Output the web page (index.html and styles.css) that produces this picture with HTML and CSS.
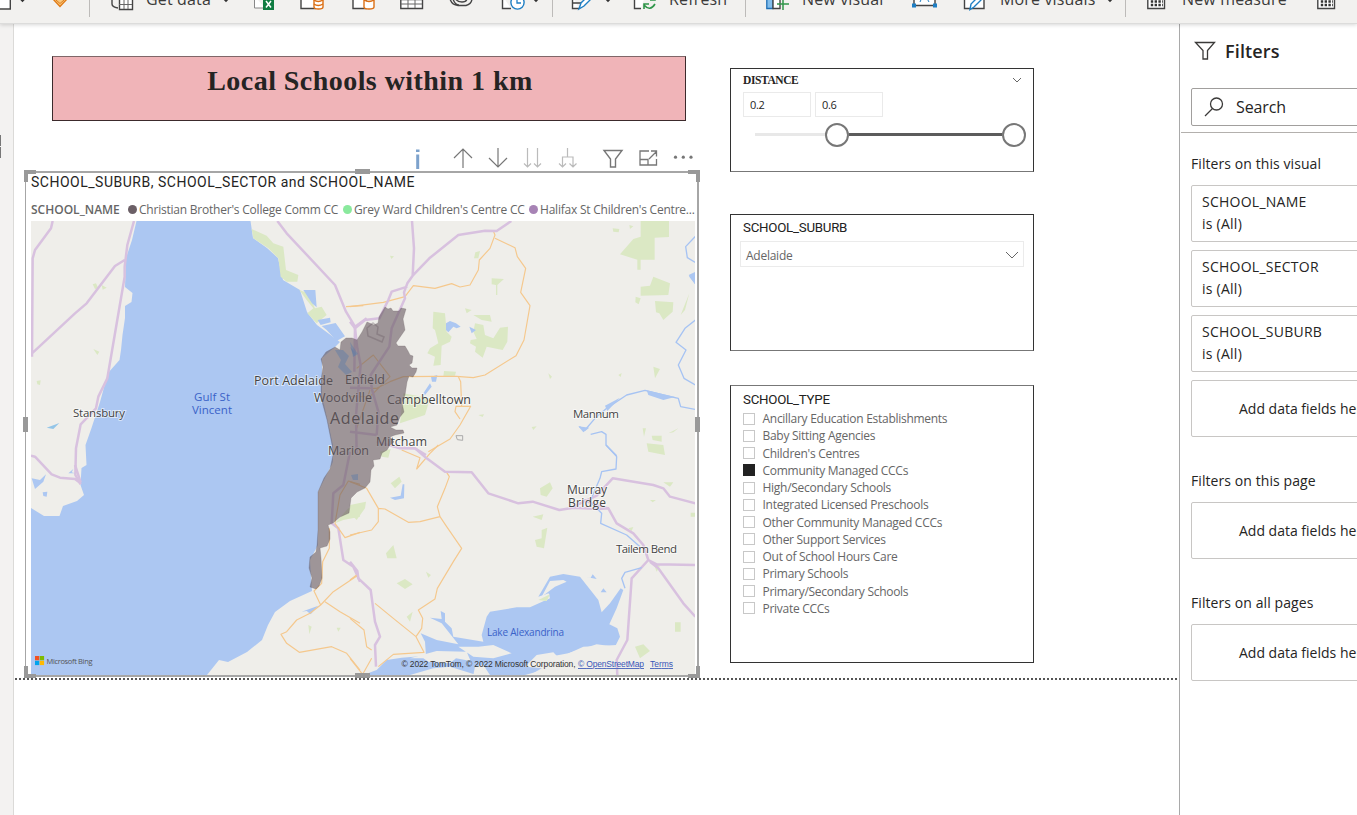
FILE: index.html
```html
<!DOCTYPE html>
<html lang="en">
<head>
<meta charset="utf-8">
<title>Local Schools report</title>
<link rel="stylesheet" href="styles.css">
</head>
<body>
<div class="app">
  <header class="ribbon">
    <svg class="ico" viewBox="0 0 24 23"><path class="line" fill="#fff" d="M-6-6H10.300V9H-6z"/></svg>
    <svg class="chev" viewBox="0 0 10 23"><path d="M1.500-2 4.500 1.200 7.500-2"/></svg>
    <svg class="ico" viewBox="0 0 24 23"><path d="M3-1 10 6.500 17-1z" fill="#f8c981" stroke="#e07b16" stroke-width="1.400"/><path d="M6 0 10 3.500 14 0" fill="none" stroke="#e07b16"/></svg>
    <i class="sep"></i>
    <svg class="ico" viewBox="0 0 24 23"><path class="line" fill="none" d="M2-6V4Q2 7 8 8"/><path class="line" fill="#fff" d="M9.500-5H22.500V9.500H9.500z"/><path class="thin" d="M9 4.500H22M14-3V9M18-3V9"/></svg>
    <span class="cmd get">Get data</span>
    <svg class="chev" viewBox="0 0 10 23"><path d="M2-2 5 1.200 8-2"/></svg>
    <svg class="ico" viewBox="0 0 24 23"><path d="M1.500-4V8H12" fill="#fff" stroke="#888"/><path fill="#107c41" d="M10-4H21V10H10z"/><path stroke="#fff" stroke-width="1.500" d="M13 1 18 7.500M18 1 13 7.500"/></svg>
    <svg class="ico" viewBox="0 0 24 23"><path class="line" fill="#fff" d="M1-5H15V8.500H1z"/><path class="orange" fill="#fff" d="M14-4V7Q14 9 18.500 9T23 7V-4z"/><path class="orange" fill="none" d="M14 0Q18 3 23 0M14 4Q18 7 23 4"/></svg>
    <svg class="ico" viewBox="0 0 24 23"><path class="line" fill="#fff" d="M1-5H14V8.500H1z"/><path class="orange" fill="#fff" d="M12 0Q17 3 22 0V7Q22 9 17 9T12 7z"/></svg>
    <svg class="ico" viewBox="0 0 24 23"><path class="line" fill="#fff" d="M.8-5H22.500V8.500H.8z"/><path class="thin" d="M1-.2H22M1 4H22M8-5V8M15-5V8"/></svg>
    <svg class="ico" viewBox="0 0 24 23"><path class="line" fill="none" d="M0-1Q2 5 8 5.500H16Q22 4 22-2M5-2Q7 2 12 2T17-2M3-1Q5 5 9 5"/></svg>
    <svg class="ico" viewBox="0 0 24 23"><path class="line" fill="#fff" d="M1.500-4V8.500H10"/><circle cx="16.500" cy="2.500" r="6.600" fill="#fff" stroke="#1f7fc4" stroke-width="1.400"/><path d="M16-2V3H20" fill="none" stroke="#1f7fc4" stroke-width="1.300"/></svg>
    <svg class="chev" viewBox="0 0 10 23"><path d="M2-2 5 1.200 8-2"/></svg>
    <i class="sep"></i>
    <svg class="ico" viewBox="0 0 24 23"><path class="line" fill="#fff" d="M1.500-4V8.500H8M1.500 3H13"/><path fill="#fff" stroke="#1f7fc4" stroke-width="1.400" d="M8 9 10 3 18-5 21-2 13 6z"/></svg>
    <svg class="chev" viewBox="0 0 10 23"><path d="M2-2 5 1.200 8-2"/></svg>
    <svg class="ico" viewBox="0 0 24 23"><path class="line" fill="#fff" d="M12-4H1.500V8.500H8"/><path fill="none" stroke="#2f9549" stroke-width="1.600" d="M11 9V4H16M11 5Q17 12 22 4M22-3V0H17"/></svg>
    <span class="cmd ref">Refresh</span>
    <i class="sep"></i>
    <svg class="ico" viewBox="0 0 24 23"><path fill="#83beec" stroke="#1f6fb5" stroke-width="1.300" d="M1.800-5H8V8.500H1.800z"/><path class="line" fill="#fff" d="M8-5V8.500H15V-5"/><path stroke="#2f9549" stroke-width="1.500" d="M18-3V10M12 4H24"/></svg>
    <span class="cmd vis">New visual</span>
    <svg class="ico" viewBox="0 0 24 23"><path class="line" fill="#fff" d="M3-6V5.500H24V-6"/><path d="M9 2 13-7 18 2M11-1H16" fill="none" stroke="#1f7fc4"/><path fill="#1f7fc4" d="M1 3.500h4v4H1zM22 3.500h4v4h-4z"/></svg>
    <svg class="ico" viewBox="0 0 24 23"><path class="line" fill="#fff" d="M1.500-4V8.500H21V-4"/><path fill="#fff" stroke="#1f7fc4" stroke-width="1.400" d="M7 9.500 8 4 17-5 20-2 11 7z"/></svg>
    <span class="cmd more">More visuals</span>
    <svg class="chev" viewBox="0 0 10 23"><path d="M2-2 5 1.200 8-2"/></svg>
    <i class="sep"></i>
    <svg class="ico" viewBox="0 0 24 23"><path class="line" fill="#fff" d="M1.800-5H18.500V8.500H1.800z"/><path stroke="#333" stroke-width="2.600" stroke-dasharray="2.400 1.400" d="M4.800 1.500H17M4.800 5H17"/></svg>
    <span class="cmd meas">New measure</span>
    <svg class="ico" viewBox="0 0 24 23"><path class="line" fill="#fff" d="M1.800-5H18.500V8.500H1.800z"/><path stroke="#333" stroke-width="2.600" stroke-dasharray="2.400 1.400" d="M4.800 1.500H17M4.800 5H17"/></svg>
  </header>

  <div class="work">
    <aside class="rail"><i></i><i></i></aside>
    <main class="canvas">
      <div class="page">
        <div class="left">
          <h1 class="title">Local Schools within 1 km</h1>
          <svg class="tools" viewBox="405 146 294 25">
            <path d="M416 149.500h3.500v2.500H416zM416.200 154.500h3V169h-3z" fill="#7da2cc"/>
            <g fill="none" stroke="#777" stroke-width="1.200">
              <path d="M463 168V149.500M454 158 463 149 472 158M498 148V167M489 158 498 167 507 158"/>
              <path stroke="#bbb" d="M527.500 148V167M524 163.500 527.500 167 531 163.500M537.500 148V167M534 163.500 537.500 167 541 163.500M567.500 148V157M562.500 167V157H573V167M559 163.500 562.500 167 566 163.500M569.500 163.500 573 167 576.500 163.500"/>
              <path stroke-width="1.400" d="M604 150.500H622L615.500 159V167H610.500V159z"/>
              <path stroke-width="1.300" d="M649 151H640V165H656.500V159M640 159.500H648V165M649 159 656.500 151.500M651 151H656.500V156.500"/>
            </g>
            <g fill="#777"><circle cx="675.500" cy="157.200" r="1.600"/><circle cx="683.300" cy="157.200" r="1.600"/><circle cx="691" cy="157.200" r="1.600"/></g>
          </svg>
          <section class="mapvis">
            <i class="h tl"></i><i class="h tr"></i><i class="h bl"></i><i class="h br"></i>
            <i class="h tm"></i><i class="h bm"></i><i class="h lm"></i><i class="h rm"></i>
            <h2 class="din maptitle">SCHOOL_SUBURB, SCHOOL_SECTOR and SCHOOL_NAME</h2>
            <div class="legend"><b>SCHOOL_NAME</b><i class="d1"></i><span class="l1">Christian Brother's College Comm CC</span><i class="d2"></i><span class="l2">Grey Ward Children's Centre CC</span><i class="d3"></i><span class="l3">Halifax St Children's Centre...</span></div>
            <svg class="map" viewBox="31 221 664 454">
              <rect x="31" y="221" width="664" height="454" fill="#efeeea"/>
              <path class="water" d="M136.500 221 132 240 126 258 125 287 132.500 293 131.500 302 125 306 125 318 122.500 335 121 350 119.500 360 108 373 100 402 91.500 428 85.500 445 86.500 465 81.500 468 80.500 485 84 495 77 501 63 506 59.500 516H44L31 508V675H207L219 660 228 662 247 652 262 640 268 625 275 612 290 601 312 591 310 560 318 545V492L333 462V445L322 395V358L335 347 340 342 317 325 307 312 300 290 283 280 278 258 267 248 253 238 250.500 221z"/>
              <!-- north-west -->
              <g transform="translate(20 215) scale(.33333)">
                <path class="green" d="M695 42 740 62 760 85 790 95 798 165 835 180 832 200 800 200 782 185 775 130 745 100 700 70zM838 225 865 235 885 280 905 275 920 300 890 325 862 295 880 280 860 255zM218 208 228 205 235 220 225 222zM245 210 260 218 248 224zM220 402 238 410 232 420zM50 498 62 496 60 510 52 508z"/>
                <path class="water" d="M850 225H886L890 277 876 265zM893 315 930 308 932 322 902 330zM905 333 947 324 975 364 950 378 920 345z"/>
                <path fill="#93c5e8" d="M80 638 118 624 100 642z"/>
                <path class="road" d="M98 18 93 40 45 105 38 130 36 425M342 18 322 90 314 155 314 185 262 490 235 545 228 580 182 628 168 700 166 780 182 808M314 135 285 153 200 265 165 295 36 415M772 18 800 55 945 210 978 290 1005 335 1003 470M1005 335 1040 310"/>
                <path class="track" d="M978 275 1030 272"/>
              </g>
              <!-- north-east -->
              <g transform="translate(350 215) scale(.33333)">
                <path class="green" d="M872 18H957V66L914 68V134H872V164H862V134L810 118 850 72 872 65zM788 40 808 42 806 52 790 50zM838 30 850 34 840 42zM910 185 960 205 955 240 872 242V215L900 212zM915 258 970 262 968 290 940 315 928 295 918 292zM857 245 872 250 866 268 856 262zM992 300 1018 235 1005 285zM425 190 462 192 442 210V240H438V210L425 208zM376 112 390 108 385 130 372 130zM250 290 285 295 290 350 305 365 300 380 275 392 272 450 250 452 255 425 232 415 240 400 265 385 255 345 248 340zM345 280 365 285 350 295zM370 300 420 300 425 320 395 315zM375 325 400 330 405 360 430 370 450 338 474 335 472 380 458 405 410 395 398 428 375 410 378 395 360 385 362 375 380 372 370 350zM282 468 318 470 315 482 280 484zM120 122 132 124 124 132zM595 475 606 485 600 492zM805 480 815 474 812 486zM910 455 930 462 915 490zM545 636 560 634 550 645zM385 600 402 598 398 606zM160 535 240 550 225 600 150 625zM878 640 888 640 882 665zM905 662 935 662 935 680 908 675zM890 685 940 690 945 720 895 710zM955 655 985 640 970 652z"/>
                <path class="stream" d="M1040 60 1007 95 1012 128 1040 145M1040 178 1020 185 1040 210M1040 312 1005 340 978 382 1008 405 985 450 1002 490 1040 512M1040 584 992 575 985 550 940 540 885 526 830 540 770 580 735 610 705 645 688 635M722 658 755 650 768 658 768 690 800 722"/>
                <path class="water" d="M288 325 300 318 318 325 332 335 320 340 310 335 295 352 288 345zM358 335 378 345 365 355zM243 485 262 480 258 500 246 500zM240 505 245 515 225 540 220 535zM0 395 18 415 12 425zM1016 180 1038 170V212zM890 526 975 546 940 555 895 540zM765 572 810 548 772 588zM685 634 718 638 700 652z"/>
                <path class="track" d="M0 275 100 262 165 245 190 212 255 220 305 206 330 216 360 210 385 165 388 135 420 100 435 60 430 48M435 70 495 98 502 125 527 160 512 232 540 272 522 375 498 422 405 480 370 488 320 484 260 484 160 485 120 500 80 520 0 520M0 545 60 545 120 485 70 420 20 460M325 485 332 500 335 574 362 574 330 630 300 672 235 710M335 574 318 574 315 590 330 612M60 525 20 640"/>
                <path class="road" d="M186 18 192 100 188 182M484 18 440 48 405 47 325 60 238 130 188 182 172 205 162 232 165 250 125 340 118 395 62 480 65 520 85 590 80 660M172 215 125 230 115 255 88 310 45 315 15 340 22 400 32 450 18 600 20 720M0 518 60 520M0 650 80 660M15 340 0 320M80 680 150 700 195 700 228 720"/>
                <path fill="none" stroke="#aaa" stroke-width="3" d="M318 662 338 662 338 676 322 674z"/>
              </g>
              <!-- south-west -->
              <g transform="translate(20 445) scale(.33333)">
                <path class="water" d="M35 100 60 105 78 88 70 110 45 132zM145 85 160 72 155 82 165 85zM68 142 82 140 80 155 70 153zM845 500 895 482 872 508 860 498z"/>
                <path class="road" d="M33 32 45 35 95 88 120 98 165 102 182 115M165 60 182 112M990 20 970 120 940 145 935 235 955 250 970 345 1000 365 1020 410"/>
                <path class="track" d="M1020 118 985 108 960 150 945 235 975 278 1020 262M928 250 928 310 908 350 905 415 882 438 902 480 870 505 830 525 800 560 783 568 800 595 838 622 935 605 980 625 1020 675M902 480 940 440 1015 390M915 470 960 500 1020 535"/>
                <path class="green" d="M945 235 985 190 1020 175V215L970 225zM865 540 875 545 868 568zM950 548 962 548 955 560z"/>
              </g>
              <!-- south-east -->
              <g transform="translate(350 445) scale(.33333)">
                <path class="water" d="M565 455 600 395 640 387 690 395 745 465 755 502 780 475 812 430 820 435 800 490 778 538 802 550 810 575 795 605 740 598 655 625 615 632 640 652 640 665 590 672 525 690 380 690 300 665 250 670 180 690H40L80 675 110 645 155 638 228 632 225 590 212 565 260 585 325 598 275 535 240 518 275 522 272 498 285 505 285 530 305 550 310 575 400 590 395 570 410 515 420 500 500 487 540 487 600 460 596 445z"/>
                <path fill="#efeeea" d="M180 640 260 618 350 620 362 648 318 640 300 655 235 650 220 640zM385 605 430 600 485 625 430 640 370 635 325 605zM525 665 560 630 610 622 620 632 650 645 640 675zM645 630 700 605 800 600 830 690H540zM600 408 640 405 650 410 615 425 575 455zM565 465 598 448 590 468zM375 665 400 660 420 690H370z"/>
                <path class="water" d="M705 395 740 402 728 388 722 398zM752 442 760 430 770 442zM120 158 152 152 158 118 163 118 162 160 135 165z"/>
                <path class="green" d="M90 20 122 12 115 38 95 35zM0 205 0 180 48 170 45 190 20 225zM122 115 148 95 155 110 135 130zM570 130 600 112 608 130 590 155 572 150zM548 215 580 208 575 225zM555 285 575 280 575 255 592 248 582 310 560 305zM565 465 600 448 590 468zM108 325 130 300 140 340 112 340zM140 415 165 402 188 418 165 432zM228 380 243 390 235 398zM170 515 188 500 180 530zM975 532H992V560H975zM940 112 970 112 960 125zM855 605 880 598 900 618 870 640zM1022 203H1036V215H1022zM835 250 850 246 845 258zM910 355 930 362 920 380zM900 165 918 165 908 172z"/>
                <path class="track" d="M155 15 210 38 200 72 240 25 265 0M0 270 65 255 85 230 85 190 50 130 0 110M85 190 105 192 175 232 210 230 270 215 262 185 285 130 298 95 290 82M270 215 290 245 335 310 310 350 262 430 255 462 205 495 218 520 215 550 198 575 222 622 130 628 85 665M75 475 130 520 198 575M0 520 42 555 50 605 65 615M0 640 38 688 65 640M0 405 20 390"/>
                <path class="road" d="M145 8 195 10 230 40 285 80 365 82 415 145 505 175 548 170 628 195 670 188 745 192 775 190 800 235 850 265 880 300 895 345 845 400 832 585 800 645 802 690M670 185 740 152 788 100 910 120 940 130 960 155 1036 175M895 345 920 358 1036 360M900 350 925 370 1000 475 1036 515M0 350 22 378 25 400 62 435 75 530 90 575 75 600 78 665M700 165 740 180 775 190"/>
                <path class="stream" d="M768 0 800 35 798 72 755 80 750 100 720 170 755 205 752 235 830 270 870 305M875 368 825 382 815 400 825 430"/>
              </g>
              <g class="labels">
                <text x="254" y="385" textLength="79">Port Adelaide</text>
                <text x="345" y="384" textLength="40">Enfield</text>
                <text x="314" y="402" textLength="58">Woodville</text>
                <text x="387" y="404" textLength="84">Campbelltown</text>
                <text x="330" y="424" textLength="69" class="city">Adelaide</text>
                <text x="376" y="446" textLength="51">Mitcham</text>
                <text x="328" y="455" textLength="41">Marion</text>
                <text x="73" y="417" textLength="52" class="sm">Stansbury</text>
                <text x="573" y="418" textLength="46" class="sm">Mannum</text>
                <text x="567" y="494" textLength="40" class="mid">Murray</text>
                <text x="568" y="507" textLength="38" class="mid">Bridge</text>
                <text x="616" y="553" textLength="61" class="sm">Tailem Bend</text>
                <text x="194" y="401" textLength="36" class="sea">Gulf St</text>
                <text x="192" y="414" textLength="40" class="sea">Vincent</text>
                <text x="487" y="636" textLength="77" class="sea lake">Lake Alexandrina</text>
              </g>
              <path fill="#685a60" fill-opacity=".6" stroke="#685a60" stroke-opacity=".25" d="M385 307 388 309 391 308 393 311 399 311 401 308 406 309 403 319 405 330 396 343 398 346 405 346 408 351 410 355 413 356 412 363 409 365 412 368 417 368 416 372 413 377 409 376 407 382 405 395 402 403 404 412 400 417 397 425 390 427 396 430 403 430 404 433 395 435 390 437 394 442 390 445 387 450 382 453 380 459 373 460 374 466 371 470 370 482 365 488 357 492 351 498 349 513 340 517 333 523 328 525 330 532 330 539 327 546 320 548 321 558 322 578 319 586 316 589 310 587 312 578 309 568 310 557 316 552 317 545 318 530 318 492 324 478 330 469 333 455 332 445 327 420 321 398 321 380 323 367 321 359 326 352 335 347 340 350 341 342 346 338 352 338 357 340 362 332 367 322 374 325 378 323 379 317z"/>
              <path fill="none" stroke="#685a60" stroke-opacity=".35" stroke-width="1.500" d="M367 328 373 323 378 327 377 334 384 337 382 342 368 336z"/>
              <path fill="#5379aa" fill-opacity=".4" d="M343 350 349 356 345 364 352 372 346 375 338 367 341 360 335 350zM350 342 358 354 353 357zM351 475 358 474 358 480 353 480z"/>
              <path fill="#f25022" d="M35 656h4.300v4.300H35z"/><path fill="#7fba00" d="M39.800 656h4.300v4.300h-4.300z"/><path fill="#00a4ef" d="M35 660.800h4.300v4.300H35z"/><path fill="#ffb900" d="M39.800 660.800h4.300v4.300h-4.300z"/>
              <text class="bing" x="46.500" y="664" textLength="46">Microsoft Bing</text>
              <text class="copy" x="401.500" y="667" textLength="174">© 2022 TomTom, © 2022 Microsoft Corporation,</text>
              <text class="copy link" x="578" y="667" textLength="66">© OpenStreetMap</text>
              <text class="copy link" x="650" y="667" textLength="23">Terms</text>
            </svg>
          </section>
        </div>

        <div class="right">
          <section class="card distance">
            <div class="dhead"><h2>DISTANCE</h2><svg width="10" height="6" viewBox="0 0 10 6"><path d="M1 1 5 5 9 1"/></svg></div>
            <div class="range"><span>0.2</span><span>0.6</span></div>
            <div class="slider"><i class="off"></i><i class="knob"></i><i class="on"></i><i class="knob"></i></div>
          </section>
          <section class="card suburb">
            <h2 class="din">SCHOOL_SUBURB</h2>
            <div class="select"><span>Adelaide</span><svg width="14" height="8" viewBox="0 0 14 8"><path d="M1 1 7 7 13 1"/></svg></div>
          </section>
          <section class="card type">
            <h2 class="din">SCHOOL_TYPE</h2>
            <ul>
              <li><i></i><span>Ancillary Education Establishments</span></li>
              <li><i></i><span>Baby Sitting Agencies</span></li>
              <li><i></i><span>Children's Centres</span></li>
              <li><i class="sel"></i><span>Community Managed CCCs</span></li>
              <li><i></i><span>High/Secondary Schools</span></li>
              <li><i></i><span>Integrated Licensed Preschools</span></li>
              <li><i></i><span>Other Community Managed CCCs</span></li>
              <li><i></i><span>Other Support Services</span></li>
              <li><i></i><span>Out of School Hours Care</span></li>
              <li><i></i><span>Primary Schools</span></li>
              <li><i></i><span>Primary/Secondary Schools</span></li>
              <li><i></i><span>Private CCCs</span></li>
            </ul>
          </section>
        </div>
      </div>
      <div class="pageend"></div>
    </main>

    <aside class="filters">
      <div class="fhead"><svg width="22" height="20" viewBox="0 0 22 20"><path d="M1.500 1.500H20.500L13.500 9.500V18H9V9.500z"/></svg><h2>Filters</h2></div>
      <div class="search"><svg width="20" height="20" viewBox="0 0 20 20"><circle cx="12.500" cy="7" r="6"/><path d="M8.500 11.500 1 19"/></svg><span>Search</span></div>
      <hr>
      <h3>Filters on this visual</h3>
      <div class="fcard"><span>SCHOOL_NAME</span><span class="all">is (All)</span></div>
      <div class="fcard"><span>SCHOOL_SECTOR</span><span class="all">is (All)</span></div>
      <div class="fcard"><span>SCHOOL_SUBURB</span><span class="all">is (All)</span></div>
      <div class="fcard add">Add data fields here</div>
      <h3>Filters on this page</h3>
      <div class="fcard add">Add data fields here</div>
      <h3>Filters on all pages</h3>
      <div class="fcard add">Add data fields here</div>
    </aside>
  </div>
</div>
</body>
</html>
```
FILE: styles.css
```css
* { box-sizing: border-box; }
body { margin: 0; background: #fff; font-family: "Open Sans", "Noto Sans", sans-serif; color: #252423; }
h1, h2, h3, ul { margin: 0; padding: 0; font-weight: 400; }
i { display: block; font-style: normal; }
.app { width: 1357px; height: 815px; overflow: hidden; display: flex; flex-direction: column; }

/* ribbon */
.ribbon {
  height: 24px; flex: none; overflow: hidden; background: #f2f1ef; border-bottom: 1px solid #dcdcdb;
  box-shadow: 0 1px 4px rgba(0, 0, 0, .16); z-index: 1; display: grid; align-items: start;
  grid-template-columns: 18px 32px 39px 21px 36px 75px 32px 47px 52px 48px 50px 51px 30px 21px 19px 32px 30px 36px 76px 20px 37px 109px 52px 37px 105px 20px 21px 36px 134px 41px;
}
.ico { width: 24px; height: 23px; overflow: visible; }
.chev { width: 10px; height: 23px; }
.chev path { fill: none; stroke: #333; stroke-width: 1.5; }
.line { stroke: #444; stroke-width: 1.4; }
.thin { stroke: #666; stroke-width: 1; fill: none; }
.orange { stroke: #dc6f14; stroke-width: 1.4; }
.sep { width: 1px; height: 17px; background: #bdbbb9; }
.cmd { font-size: 16px; line-height: 22px; margin-top: -12px; white-space: nowrap; color: #3b3a39; letter-spacing: .15px; }

/* work area */
.work { flex: 1; display: flex; min-height: 0; }
.rail { width: 14px; background: #f3f2f1; border-right: 1px solid #dbdad8; padding-top: 111px; flex: none; }
.rail i { width: 1px; height: 11px; background: #777; margin-bottom: 1px; }
.canvas { width: 1165px; flex: none; }
.page { height: 654px; display: flex; }
.pageend { height: 2px; margin-left: 1px; margin-right: 1px; background: repeating-linear-gradient(90deg, #555 0 2px, #fff 2px 4px); }
.left { width: 716px; flex: none; padding: 32px 0 0 11px; }
.title {
  width: 634px; height: 65px; margin-left: 27px; background: #f0b4b8; border: 1px solid #3c2a2c; border-top-color: #806668;
  font: bold 28px/48px "Liberation Serif", serif; text-align: center; letter-spacing: .45px; padding-left: 2px;
}
.tools { display: block; width: 294px; height: 25px; margin: 25px 0 0 380px; }
.din { font-family: Roboto, sans-serif; }

.mapvis { position: relative; width: 674px; height: 506px; border: 1px solid #a6a6a6; border-width: 2px 2px 2px 1px; padding-left: 5px; }
.maptitle { font-size: 14px; line-height: 19px; white-space: nowrap; height: 25px; letter-spacing: .51px; }
.legend { display: flex; align-items: center; height: 23px; padding-bottom: 1px; font-size: 12px; color: #666; white-space: nowrap; letter-spacing: -.22px; }
.legend b { font-weight: 600; width: 97px; letter-spacing: 0; }
.legend i { width: 9px; height: 9px; border-radius: 50%; margin-right: 2px; flex: none; }
.legend span { flex: none; }
.l1 { width: 204px; } .l2 { width: 175px; }
.d1 { background: #6b5f66; } .d2 { background: #8ae99d; } .d3 { background: #a783b5; }
.map { display: block; width: 664px; height: 454px; }
.h { position: absolute; background: #999; }
.tl, .tr, .bl, .br { width: 12px; height: 12px; background: none; border: 0 solid #999; }
.tl { left: -2px; top: -3px; border-width: 4px 0 0 4px; }
.tr { right: -3px; top: -3px; border-width: 4px 4px 0 0; }
.bl { left: -2px; bottom: -3px; border-width: 0 0 4px 4px; }
.br { right: -3px; bottom: -3px; border-width: 0 4px 4px 0; }
.tm, .bm { width: 15px; height: 5px; left: 329px; }
.tm { top: -4px; } .bm { bottom: -3px; }
.lm, .rm { width: 5px; height: 15px; top: 244px; }
.lm { left: -3px; } .rm { right: -3px; }

.water { fill: #acc7f2; }
.green { fill: #dbe8c4; }
.stream { fill: none; stroke: #a6c3f3; stroke-width: 4; stroke-linejoin: round; }
.road { fill: none; stroke: #d8c1df; stroke-width: 7.5; stroke-linejoin: round; }
.track { fill: none; stroke: #f5c88d; stroke-width: 3.5; stroke-linejoin: round; }
.labels text { font: 12.5px "Open Sans", "Noto Sans", sans-serif; fill: #444; stroke: #fff; stroke-width: 2px; stroke-opacity: .55; paint-order: stroke; }
.labels .city { font-size: 16px; }
.labels .mid { font-size: 12px; }
.labels .sm { font-size: 11.5px; }
.labels .sea { font-size: 11.5px; fill: #3a62c8; stroke: none; }
.labels .lake { font-size: 10px; }
.bing { font: 7.5px "Open Sans", sans-serif; fill: #555; }
.copy { font: 8.5px "Liberation Sans", sans-serif; fill: #333; }
.link { fill: #3a57b8; text-decoration: underline; }

/* slicers */
.right { width: 304px; padding-top: 44px; }
.card { border: 1px solid #333; width: 304px; padding: 0 9px 0 12px; }
.card .din { font-size: 13.3px; line-height: 16px; color: #222; letter-spacing: -.25px; }
.card svg path { fill: none; stroke: #666; }
.distance { height: 104px; border-bottom-color: #777; }
.distance h2 { font: bold 11.5px/15px "Liberation Serif", serif; letter-spacing: -.4px; }
.dhead { display: flex; justify-content: space-between; align-items: center; padding: 3px 2px 0 0; height: 19px; }
.range { display: flex; gap: 4px; margin-top: 4px; }
.range span { width: 68px; height: 25px; border: 1px solid #eaeaea; font-size: 11px; line-height: 23px; padding-left: 6px; letter-spacing: -.3px; }
.slider { display: flex; align-items: center; margin: 5px -2px 0 12px; height: 25px; }
.off { width: 70px; height: 3px; background: #e8e8e8; }
.on { flex: 1; height: 3px; background: #5c5c5c; }
.knob { width: 24px; height: 24px; border: 2px solid #777; border-radius: 50%; background: #fff; flex: none; }
.suburb { height: 137px; margin-top: 42px; padding-top: 5px; border-bottom-color: #777; }
.select { width: 284px; height: 26px; border: 1px solid #ebebeb; margin: 5px 0 0 -3px; padding: 2px 4px 0 5px; display: flex; justify-content: space-between; align-items: center; font-size: 12px; color: #666; letter-spacing: -.25px; }
.type { height: 278px; margin-top: 34px; padding-top: 6px; border-top-color: #777; }
.type ul { list-style: none; margin-top: 2px; }
.type li { display: flex; align-items: center; height: 17.25px; font-size: 12px; color: #666; white-space: nowrap; letter-spacing: -.28px; }
.type li i { width: 12px; height: 12px; border: 1px solid #c8c8c8; margin-right: 7.5px; }
.type li i.sel { background: #222; border-color: #222; }

/* filters pane */
.filters { width: 178px; flex: none; border-left: 1px solid #a9a9a9; overflow: hidden; padding-left: 11px; }
.fhead { display: flex; align-items: center; height: 28px; margin: 13px 0 0 3px; }
.fhead h2 { font-size: 18px; font-weight: 600; margin-left: 9px; letter-spacing: .15px; }
.filters svg { fill: none; stroke: #3b3a39; stroke-width: 1.3; flex: none; }
.search { width: 200px; height: 38px; margin-top: 23px; border: 1px solid #a19f9d; border-radius: 2px; display: flex; align-items: center; padding-left: 12px; gap: 12px; font-size: 16px; letter-spacing: -.1px; }
hr { border: 0; height: 1px; background: #b3b0ad; margin: 6px 0 0 -10px; }
h3 { font-size: 14px; line-height: 20px; margin: 21px 0 11px; white-space: nowrap; letter-spacing: .08px; }
.fcard { width: 200px; height: 57px; border: 1px solid #c8c6c4; border-radius: 2px; margin-bottom: 8px; padding: 5px 10px; display: flex; flex-direction: column; font-size: 14px; line-height: 22px; white-space: nowrap; letter-spacing: .25px; }
.add { padding: 17px 0 0 47px; letter-spacing: 0; }
.add + h3 { margin-top: 34px; }
```
